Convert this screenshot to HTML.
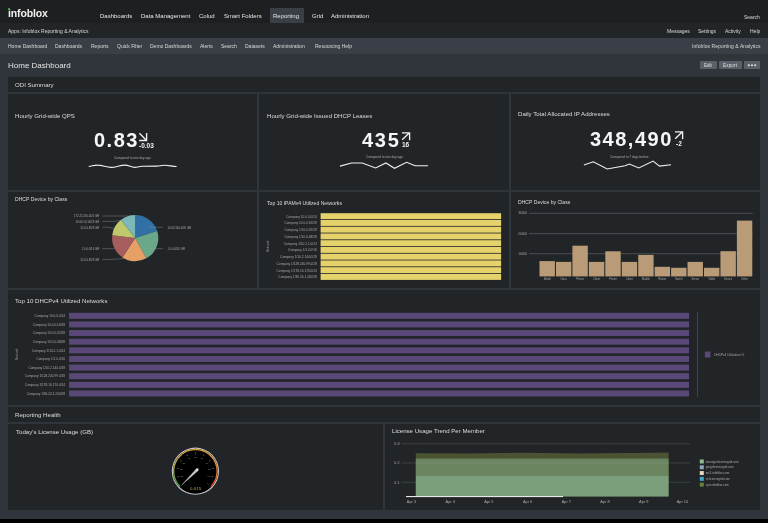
<!DOCTYPE html>
<html><head><meta charset="utf-8">
<style>
*{margin:0;padding:0;box-sizing:border-box}
html,body{width:768px;height:523px;overflow:hidden;background:#000;font-family:"Liberation Sans",sans-serif}
.a{will-change:transform}
svg text{font-family:"Liberation Sans",sans-serif}
.a{position:absolute;white-space:nowrap}
#top{position:absolute;left:0;top:0;width:768px;height:23px;background:#1e1f21}
#app{position:absolute;left:0;top:23px;width:768px;height:15px;background:#222528}
#nav{position:absolute;left:0;top:38px;width:768px;height:16px;background:#3a3f47}
#page{position:absolute;left:0;top:54px;width:768px;height:465px;background:#30343b}
.pn{position:absolute;background:#222528}
.t6{font-size:6px;color:#e6e6e6}
.t5{font-size:5px;color:#d8d8d8}
.big{font-size:20px;font-weight:bold;color:#f7f7f7;letter-spacing:1px;line-height:20px}
.dl{font-size:6.5px;font-weight:bold;color:#f0f0f0;line-height:7px}
.cmp{font-size:3.2px;color:#a8a8a8;line-height:4px}
.t5b{font-size:5.1px;color:#dcdcdc;line-height:6px}
.ttl{font-size:6.1px;color:#dcdcdc}
</style></head><body>
<div id="top"></div>
<div id="app"></div>
<div id="nav"></div>
<div id="page"></div>

<!-- logo -->
<div class="a" style="left:7.5px;top:6.5px;font-size:10.5px;font-weight:bold;color:#f0f0f0;letter-spacing:-0.15px">infoblox</div>
<div class="a" style="left:8px;top:8.3px;width:2.2px;height:2.2px;border-radius:1.1px;background:#2fb84a"></div>

<!-- top nav -->
<div class="a t6" style="left:100px;top:12.7px">Dashboards</div>
<div class="a t6" style="left:141px;top:12.7px">Data Management</div>
<div class="a t6" style="left:199px;top:12.7px">Colud</div>
<div class="a t6" style="left:224px;top:12.7px">Smart Folders</div>
<div class="a" style="left:270px;top:8px;width:34px;height:15px;background:#3a3f47"></div>
<div class="a t6" style="left:273px;top:12.7px">Reporting</div>
<div class="a t6" style="left:312px;top:12.7px">Grid</div>
<div class="a t6" style="left:331px;top:12.7px">Administration</div>
<div class="a t5" style="left:744px;top:14px">Search</div>

<!-- app bar -->
<div class="a t5" style="left:8px;top:28px">Apps: Infoblox Reporting &amp; Analytics</div>
<div class="a t5" style="left:667px;top:28px">Messages</div>
<div class="a t5" style="left:698px;top:28px">Settings</div>
<div class="a t5" style="left:725px;top:28px">Activity</div>
<div class="a t5" style="left:750px;top:28px">Help</div>

<!-- sub nav -->
<div class="a t5" style="left:8px;top:43px">Home Dashboard</div>
<div class="a t5" style="left:55px;top:43px">Dashboards</div>
<div class="a t5" style="left:91px;top:43px">Reports</div>
<div class="a t5" style="left:117px;top:43px">Quick Filter</div>
<div class="a t5" style="left:150px;top:43px">Demo Dashboards</div>
<div class="a t5" style="left:200px;top:43px">Alerts</div>
<div class="a t5" style="left:221px;top:43px">Search</div>
<div class="a t5" style="left:245px;top:43px">Datasets</div>
<div class="a t5" style="left:273px;top:43px">Administration</div>
<div class="a t5" style="left:315px;top:43px">Resourcing Help</div>
<div class="a t5" style="left:692px;top:43px;letter-spacing:0.07px">Infoblox Reporting &amp; Analytics</div>

<!-- page header -->
<div class="a" style="left:8px;top:60.7px;font-size:8px;color:#e2e2e2">Home Dashboard</div>
<div class="a" style="left:700px;top:61px;width:17px;height:8px;background:#5a6069;border-radius:1px"></div>
<div class="a" style="left:719px;top:61px;width:23px;height:8px;background:#5a6069;border-radius:1px"></div>
<div class="a" style="left:744px;top:61px;width:16px;height:8px;background:#5a6069;border-radius:1px"></div>
<div class="a" style="left:704px;top:62.5px;font-size:4.5px;color:#e0e0e0">Edit</div>
<div class="a" style="left:722.8px;top:62.5px;font-size:4.5px;color:#e0e0e0;letter-spacing:0.2px">Export</div>
<svg class="a" style="left:744px;top:61px" width="16" height="8"><circle cx="4.8" cy="4.3" r="0.95" fill="#eeeeee"/><circle cx="8" cy="4.3" r="0.95" fill="#eeeeee"/><circle cx="11.2" cy="4.3" r="0.95" fill="#eeeeee"/></svg>

<!-- panels -->
<div class="pn" style="left:8px;top:77px;width:752px;height:15px"></div>
<div class="a ttl" style="left:15px;top:81px">ODI Summary</div>

<div class="pn" style="left:8px;top:94px;width:249px;height:96px"></div>
<div class="pn" style="left:259px;top:94px;width:250px;height:96px"></div>
<div class="pn" style="left:511px;top:94px;width:249px;height:96px"></div>

<div class="pn" style="left:8px;top:192px;width:249px;height:96px"></div>
<div class="pn" style="left:259px;top:192px;width:250px;height:96px"></div>
<div class="pn" style="left:511px;top:192px;width:249px;height:96px"></div>

<div class="pn" style="left:8px;top:290px;width:752px;height:115px"></div>

<div class="pn" style="left:8px;top:407px;width:752px;height:15px"></div>
<div class="a ttl" style="left:15px;top:411px">Reporting Health</div>

<div class="pn" style="left:8px;top:424px;width:375px;height:86.3px"></div>
<div class="pn" style="left:385px;top:424px;width:375px;height:86.3px"></div>


<!-- KPI 1 -->
<div class="a ttl" style="left:15px;top:112.3px">Hourly Grid-wide QPS</div>
<div class="a big" style="left:94px;top:130px;letter-spacing:1.5px">0.83</div>
<svg class="a" style="left:137px;top:131px" width="12" height="12" viewBox="0 0 12 12"><path d="M2.4 2.2 L9.6 9.4 M2.2 9.5 H9.6 V2" stroke="#f0f0f0" stroke-width="1.35" fill="none"/></svg>
<div class="a dl" style="left:139px;top:142px">-0.03</div>
<div class="a cmp" style="left:114px;top:155.5px">Compared to one day ago</div>
<svg class="a" style="left:0;top:0" width="768" height="200"><path d="M88.7 166.5 C92 166,95 165,97.4 165.1 C103 165.2,106 167.4,111 167.4 C116 167.4,120 165.1,124.6 165.1 C129 165.1,131 167.4,134.5 167.4 C138 167.4,139 166.5,141.9 166.3 L156.8 166.1 C160 166,161 165.3,164.2 165.3 C169 165.3,172 166.5,176.6 166.5" stroke="#f0f0f0" stroke-width="1.1" fill="none"/></svg>

<!-- KPI 2 -->
<div class="a ttl" style="left:267px;top:111.6px">Hourly Grid-wide Issued DHCP Leases</div>
<div class="a big" style="left:361.8px;top:130px;letter-spacing:1.7px">435</div>
<svg class="a" style="left:400px;top:131px" width="12" height="12" viewBox="0 0 12 12"><path d="M2.2 8.8 L9.4 1.8 M1.9 1.8 H9.6 V9.2" stroke="#f0f0f0" stroke-width="1.35" fill="none"/></svg>
<div class="a dl" style="left:401.5px;top:141px">16</div>
<div class="a cmp" style="left:366px;top:155px">Compared to one day ago</div>
<svg class="a" style="left:0;top:0" width="768" height="200"><polyline points="340,166.1 351.5,163 362.2,163 375.6,168 385.9,163 394.5,168.3 406.6,162.3 415.2,165.8 428.1,165.8" stroke="#f0f0f0" stroke-width="1.1" fill="none"/></svg>

<!-- KPI 3 -->
<div class="a ttl" style="left:518px;top:110.3px">Daily Total Allocated IP Addresses</div>
<div class="a big" style="left:590px;top:129px;letter-spacing:1.5px">348,490</div>
<svg class="a" style="left:673px;top:130px" width="12" height="12" viewBox="0 0 12 12"><path d="M2.2 8.8 L9.4 1.8 M1.9 1.8 H9.6 V9.2" stroke="#f0f0f0" stroke-width="1.35" fill="none"/></svg>
<div class="a dl" style="left:675.5px;top:139.5px">-2</div>
<div class="a cmp" style="left:609.5px;top:154.5px">Compared to 7 days before</div>
<svg class="a" style="left:0;top:0" width="768" height="200"><polyline points="583.9,165.1 593.3,161.8 607.2,169 625.1,165.8 629.4,164.1 638.8,168 653.1,161.1 659.5,166.1 671,164.8" stroke="#f0f0f0" stroke-width="1.1" fill="none"/></svg>
<!-- CHARTS -->
<div class="a t5b" style="left:15px;top:195.5px">DHCP Device by Class</div>
<div class="a t5b" style="left:267px;top:200px">Top 10 IPAMv4 Utilized Networks</div>
<div class="a t5b" style="left:518px;top:199px">DHCP Device by Class</div>
<div class="a ttl" style="left:15px;top:296.5px">Top 10 DHCPv4 Utilized Networks</div>
<svg class="a" style="left:0;top:0" width="768" height="523">
<path d="M135.2,238.1 L135.20,215.00 A23.1,23.1 0 0 1 157.19,231.04 Z" fill="#3070a4"/>
<path d="M135.2,238.1 L157.19,231.04 A23.1,23.1 0 0 1 146.29,258.36 Z" fill="#69a98a"/>
<path d="M135.2,238.1 L146.29,258.36 A23.1,23.1 0 0 1 122.48,257.38 Z" fill="#e6a066"/>
<path d="M135.2,238.1 L122.48,257.38 A23.1,23.1 0 0 1 112.28,235.24 Z" fill="#a65d5e"/>
<path d="M135.2,238.1 L112.28,235.24 A23.1,23.1 0 0 1 121.01,219.87 Z" fill="#bfc86b"/>
<path d="M135.2,238.1 L121.01,219.87 A23.1,23.1 0 0 1 135.20,215.00 Z" fill="#7bb8b8"/>
<text x="99.2" y="217.4" font-size="2.8" fill="#a6a6a6" text-anchor="end">172.25.250.0/25 GR</text>
<polyline points="102.3,216.0 135,216.0" stroke="#9a9a9a" stroke-width="0.4" fill="none"/>
<text x="99.2" y="222.8" font-size="2.8" fill="#a6a6a6" text-anchor="end">10.60.10.16/28 GR</text>
<polyline points="102.3,221.4 114,221.4 120.2,220.5" stroke="#9a9a9a" stroke-width="0.4" fill="none"/>
<text x="99.2" y="228.6" font-size="2.8" fill="#a6a6a6" text-anchor="end">10.0.0.8/28 GR</text>
<polyline points="102.3,227.2 108,227.2 113.8,228.5" stroke="#9a9a9a" stroke-width="0.4" fill="none"/>
<text x="99.2" y="250.1" font-size="2.8" fill="#a6a6a6" text-anchor="end">1.0.0.0/16 GR</text>
<polyline points="102.3,248.7 114.7,248.7" stroke="#9a9a9a" stroke-width="0.4" fill="none"/>
<text x="99.2" y="261.09999999999997" font-size="2.8" fill="#a6a6a6" text-anchor="end">10.0.0.8/28 GR</text>
<polyline points="102.3,259.7 118,259.0 123.8,258.4" stroke="#9a9a9a" stroke-width="0.4" fill="none"/>
<text x="167.5" y="228.6" font-size="2.8" fill="#a6a6a6">10.64.160.0/20 GR</text>
<polyline points="149,227.2 163,227.2" stroke="#9a9a9a" stroke-width="0.4" fill="none"/>
<text x="167.5" y="250.1" font-size="2.8" fill="#a6a6a6">1.0.0.0/20 GR</text>
<polyline points="149,248.7 163,248.7" stroke="#9a9a9a" stroke-width="0.4" fill="none"/>
<rect x="320.6" y="213.20" width="180.5" height="5.95" fill="#e5d26b"/>
<text x="316.8" y="217.60" font-size="3.2" fill="#a6a6a6" text-anchor="end">Company 10.0.0.0/24</text>
<rect x="320.6" y="219.95" width="180.5" height="5.95" fill="#e5d26b"/>
<text x="316.8" y="224.35" font-size="3.2" fill="#a6a6a6" text-anchor="end">Company 10.0.0.16/28</text>
<rect x="320.6" y="226.70" width="180.5" height="5.95" fill="#e5d26b"/>
<text x="316.8" y="231.10" font-size="3.2" fill="#a6a6a6" text-anchor="end">Company 1/10.0.32/28</text>
<rect x="320.6" y="233.45" width="180.5" height="5.95" fill="#e5d26b"/>
<text x="316.8" y="237.85" font-size="3.2" fill="#a6a6a6" text-anchor="end">Company 1/10.0.48/28</text>
<rect x="320.6" y="240.20" width="180.5" height="5.95" fill="#e5d26b"/>
<text x="316.8" y="244.60" font-size="3.2" fill="#a6a6a6" text-anchor="end">Company 1/10.2.1.0/24</text>
<rect x="320.6" y="246.95" width="180.5" height="5.95" fill="#e5d26b"/>
<text x="316.8" y="251.35" font-size="3.2" fill="#a6a6a6" text-anchor="end">Company 1/1.0.0/16</text>
<rect x="320.6" y="253.70" width="180.5" height="5.95" fill="#e5d26b"/>
<text x="316.8" y="258.10" font-size="3.2" fill="#a6a6a6" text-anchor="end">Company 1/10.2.144.0/28</text>
<rect x="320.6" y="260.45" width="180.5" height="5.95" fill="#e5d26b"/>
<text x="316.8" y="264.85" font-size="3.2" fill="#a6a6a6" text-anchor="end">Company 1/128.240.99.0/28</text>
<rect x="320.6" y="267.20" width="180.5" height="5.95" fill="#e5d26b"/>
<text x="316.8" y="271.60" font-size="3.2" fill="#a6a6a6" text-anchor="end">Company 1/178.16.170.0/24</text>
<rect x="320.6" y="273.95" width="180.5" height="5.95" fill="#e5d26b"/>
<text x="316.8" y="278.35" font-size="3.2" fill="#a6a6a6" text-anchor="end">Company 1/36.24.1.240/28</text>
<text transform="translate(269.4,246.5) rotate(-90)" font-size="3.2" fill="#a6a6a6" text-anchor="middle">Network</text>
<rect x="528.9" y="212.8" width="223.9" height="1" fill="#4a4e54"/>
<text x="527" y="214.4" font-size="3.2" fill="#a6a6a6" text-anchor="end">30000</text>
<rect x="528.9" y="233.1" width="223.9" height="1" fill="#4a4e54"/>
<text x="527" y="234.7" font-size="3.2" fill="#a6a6a6" text-anchor="end">20000</text>
<rect x="528.9" y="253.2" width="223.9" height="1" fill="#4a4e54"/>
<text x="527" y="254.79999999999998" font-size="3.2" fill="#a6a6a6" text-anchor="end">10000</text>
<rect x="539.50" y="261.1" width="15.4" height="15.30" fill="#b99b77"/>
<text x="547.20" y="280.00" font-size="2.6" fill="#aaaaaa" text-anchor="middle">Model</text>
<rect x="555.95" y="261.9" width="15.4" height="14.50" fill="#b99b77"/>
<text x="563.65" y="280.00" font-size="2.6" fill="#aaaaaa" text-anchor="middle">Class</text>
<rect x="572.40" y="245.7" width="15.4" height="30.70" fill="#b99b77"/>
<text x="580.10" y="280.00" font-size="2.6" fill="#aaaaaa" text-anchor="middle">Phone</text>
<rect x="588.85" y="261.9" width="15.4" height="14.50" fill="#b99b77"/>
<text x="596.55" y="280.00" font-size="2.6" fill="#aaaaaa" text-anchor="middle">Client</text>
<rect x="605.30" y="251.3" width="15.4" height="25.10" fill="#b99b77"/>
<text x="613.00" y="280.00" font-size="2.6" fill="#aaaaaa" text-anchor="middle">Printer</text>
<rect x="621.75" y="261.9" width="15.4" height="14.50" fill="#b99b77"/>
<text x="629.45" y="280.00" font-size="2.6" fill="#aaaaaa" text-anchor="middle">Client</text>
<rect x="638.20" y="254.9" width="15.4" height="21.50" fill="#b99b77"/>
<text x="645.90" y="280.00" font-size="2.6" fill="#aaaaaa" text-anchor="middle">Mobile</text>
<rect x="654.65" y="266.8" width="15.4" height="9.60" fill="#b99b77"/>
<text x="662.35" y="280.00" font-size="2.6" fill="#aaaaaa" text-anchor="middle">Router</text>
<rect x="671.10" y="267.8" width="15.4" height="8.60" fill="#b99b77"/>
<text x="678.80" y="280.00" font-size="2.6" fill="#aaaaaa" text-anchor="middle">Switch</text>
<rect x="687.55" y="261.9" width="15.4" height="14.50" fill="#b99b77"/>
<text x="695.25" y="280.00" font-size="2.6" fill="#aaaaaa" text-anchor="middle">Server</text>
<rect x="704.00" y="267.8" width="15.4" height="8.60" fill="#b99b77"/>
<text x="711.70" y="280.00" font-size="2.6" fill="#aaaaaa" text-anchor="middle">Tablet</text>
<rect x="720.45" y="251.2" width="15.4" height="25.20" fill="#b99b77"/>
<text x="728.15" y="280.00" font-size="2.6" fill="#aaaaaa" text-anchor="middle">Device</text>
<rect x="736.90" y="220.6" width="15.4" height="55.80" fill="#b99b77"/>
<text x="744.60" y="280.00" font-size="2.6" fill="#aaaaaa" text-anchor="middle">Other</text>
<rect x="69.1" y="312.80" width="619.9" height="6.0" fill="#5a4978"/>
<text x="65.1" y="317.00" font-size="3.2" fill="#a6a6a6" text-anchor="end">Company 10.0.0.0/24</text>
<rect x="69.1" y="321.43" width="619.9" height="6.0" fill="#5a4978"/>
<text x="65.1" y="325.63" font-size="3.2" fill="#a6a6a6" text-anchor="end">Company 10.0.0.16/28</text>
<rect x="69.1" y="330.06" width="619.9" height="6.0" fill="#5a4978"/>
<text x="65.1" y="334.26" font-size="3.2" fill="#a6a6a6" text-anchor="end">Company 1/10.0.32/28</text>
<rect x="69.1" y="338.69" width="619.9" height="6.0" fill="#5a4978"/>
<text x="65.1" y="342.89" font-size="3.2" fill="#a6a6a6" text-anchor="end">Company 1/10.0.48/28</text>
<rect x="69.1" y="347.32" width="619.9" height="6.0" fill="#5a4978"/>
<text x="65.1" y="351.52" font-size="3.2" fill="#a6a6a6" text-anchor="end">Company 1/10.2.1.0/24</text>
<rect x="69.1" y="355.95" width="619.9" height="6.0" fill="#5a4978"/>
<text x="65.1" y="360.15" font-size="3.2" fill="#a6a6a6" text-anchor="end">Company 1/1.0.0/16</text>
<rect x="69.1" y="364.58" width="619.9" height="6.0" fill="#5a4978"/>
<text x="65.1" y="368.78" font-size="3.2" fill="#a6a6a6" text-anchor="end">Company 1/10.2.144.0/28</text>
<rect x="69.1" y="373.21" width="619.9" height="6.0" fill="#5a4978"/>
<text x="65.1" y="377.41" font-size="3.2" fill="#a6a6a6" text-anchor="end">Company 1/128.240.99.0/28</text>
<rect x="69.1" y="381.84" width="619.9" height="6.0" fill="#5a4978"/>
<text x="65.1" y="386.04" font-size="3.2" fill="#a6a6a6" text-anchor="end">Company 1/178.16.170.0/24</text>
<rect x="69.1" y="390.47" width="619.9" height="6.0" fill="#5a4978"/>
<text x="65.1" y="394.67" font-size="3.2" fill="#a6a6a6" text-anchor="end">Company 1/36.24.1.240/28</text>
<text transform="translate(17.6,354.5) rotate(-90)" font-size="3.2" fill="#a6a6a6" text-anchor="middle">Network</text>
<rect x="697.2" y="312" width="0.8" height="85" fill="#4a4e54"/>
<rect x="704.9" y="351.6" width="5.5" height="5.9" fill="#5a4978"/>
<text x="714.3" y="355.8" font-size="3.1" fill="#a6a6a6">DHCPv4 Utilization %</text>
</svg><!-- /CHARTS -->
<!-- BOTTOM -->
<div class="a ttl" style="left:15.5px;top:427.5px">Today&apos;s License Usage (GB)</div>
<div class="a ttl" style="left:392px;top:427px">License Usage Trend Per Member</div>
<svg class="a" style="left:0;top:0" width="768" height="523">
<defs><linearGradient id="gg" x1="0" y1="1" x2="1" y2="1"><stop offset="0" stop-color="#3f9a40"/><stop offset="0.12" stop-color="#7aa844"/><stop offset="0.3" stop-color="#c4b040"/><stop offset="0.5" stop-color="#e4a83a"/><stop offset="0.78" stop-color="#e88a34"/><stop offset="1" stop-color="#e0402a"/></linearGradient></defs>
<circle cx="195.4" cy="471.2" r="23.6" fill="#c4c4c4"/>
<circle cx="195.4" cy="471.2" r="22.5" fill="#000"/>
<path d="M180.06,486.54 A21.7,21.7 0 0 1 178.63,484.97" stroke="#439b40" stroke-width="1.3" fill="none"/>
<path d="M178.78,485.15 A21.7,21.7 0 0 1 177.50,483.46" stroke="#4c9e41" stroke-width="1.3" fill="none"/>
<path d="M177.62,483.65 A21.7,21.7 0 0 1 176.49,481.85" stroke="#55a142" stroke-width="1.3" fill="none"/>
<path d="M176.61,482.05 A21.7,21.7 0 0 1 175.64,480.16" stroke="#5da342" stroke-width="1.3" fill="none"/>
<path d="M175.73,480.37 A21.7,21.7 0 0 1 174.93,478.41" stroke="#66a643" stroke-width="1.3" fill="none"/>
<path d="M175.01,478.62 A21.7,21.7 0 0 1 174.38,476.60" stroke="#71a843" stroke-width="1.3" fill="none"/>
<path d="M174.44,476.82 A21.7,21.7 0 0 1 173.99,474.74" stroke="#7eaa42" stroke-width="1.3" fill="none"/>
<path d="M174.03,474.97 A21.7,21.7 0 0 1 173.76,472.86" stroke="#8bab42" stroke-width="1.3" fill="none"/>
<path d="M173.78,473.09 A21.7,21.7 0 0 1 173.70,470.97" stroke="#98ac41" stroke-width="1.3" fill="none"/>
<path d="M173.70,471.20 A21.7,21.7 0 0 1 173.80,469.08" stroke="#a5ae40" stroke-width="1.3" fill="none"/>
<path d="M173.78,469.31 A21.7,21.7 0 0 1 174.07,467.21" stroke="#b2af40" stroke-width="1.3" fill="none"/>
<path d="M174.03,467.43 A21.7,21.7 0 0 1 174.50,465.36" stroke="#baaf3f" stroke-width="1.3" fill="none"/>
<path d="M174.44,465.58 A21.7,21.7 0 0 1 175.09,463.57" stroke="#beae3e" stroke-width="1.3" fill="none"/>
<path d="M175.01,463.78 A21.7,21.7 0 0 1 175.83,461.82" stroke="#c2ad3e" stroke-width="1.3" fill="none"/>
<path d="M175.73,462.03 A21.7,21.7 0 0 1 176.72,460.15" stroke="#c6ac3d" stroke-width="1.3" fill="none"/>
<path d="M176.61,460.35 A21.7,21.7 0 0 1 177.76,458.57" stroke="#caab3c" stroke-width="1.3" fill="none"/>
<path d="M177.62,458.75 A21.7,21.7 0 0 1 178.92,457.08" stroke="#ceaa3b" stroke-width="1.3" fill="none"/>
<path d="M178.78,457.25 A21.7,21.7 0 0 1 180.22,455.70" stroke="#d2a93b" stroke-width="1.3" fill="none"/>
<path d="M180.06,455.86 A21.7,21.7 0 0 1 181.63,454.43" stroke="#d6a83a" stroke-width="1.3" fill="none"/>
<path d="M181.45,454.58 A21.7,21.7 0 0 1 183.14,453.30" stroke="#d8a83a" stroke-width="1.3" fill="none"/>
<path d="M182.95,453.42 A21.7,21.7 0 0 1 184.75,452.29" stroke="#daa83a" stroke-width="1.3" fill="none"/>
<path d="M184.55,452.41 A21.7,21.7 0 0 1 186.44,451.44" stroke="#dba83a" stroke-width="1.3" fill="none"/>
<path d="M186.23,451.53 A21.7,21.7 0 0 1 188.19,450.73" stroke="#dda83a" stroke-width="1.3" fill="none"/>
<path d="M187.98,450.81 A21.7,21.7 0 0 1 190.00,450.18" stroke="#dea83a" stroke-width="1.3" fill="none"/>
<path d="M189.78,450.24 A21.7,21.7 0 0 1 191.86,449.79" stroke="#e0a83a" stroke-width="1.3" fill="none"/>
<path d="M191.63,449.83 A21.7,21.7 0 0 1 193.74,449.56" stroke="#e1a83a" stroke-width="1.3" fill="none"/>
<path d="M193.51,449.58 A21.7,21.7 0 0 1 195.63,449.50" stroke="#e3a83a" stroke-width="1.3" fill="none"/>
<path d="M195.40,449.50 A21.7,21.7 0 0 1 197.52,449.60" stroke="#e4a73a" stroke-width="1.3" fill="none"/>
<path d="M197.29,449.58 A21.7,21.7 0 0 1 199.39,449.87" stroke="#e4a53a" stroke-width="1.3" fill="none"/>
<path d="M199.17,449.83 A21.7,21.7 0 0 1 201.24,450.30" stroke="#e4a43a" stroke-width="1.3" fill="none"/>
<path d="M201.02,450.24 A21.7,21.7 0 0 1 203.03,450.89" stroke="#e5a33a" stroke-width="1.3" fill="none"/>
<path d="M202.82,450.81 A21.7,21.7 0 0 1 204.78,451.63" stroke="#e5a13a" stroke-width="1.3" fill="none"/>
<path d="M204.57,451.53 A21.7,21.7 0 0 1 206.45,452.52" stroke="#e5a03a" stroke-width="1.3" fill="none"/>
<path d="M206.25,452.41 A21.7,21.7 0 0 1 208.03,453.56" stroke="#e69f3a" stroke-width="1.3" fill="none"/>
<path d="M207.85,453.42 A21.7,21.7 0 0 1 209.52,454.72" stroke="#e69d3a" stroke-width="1.3" fill="none"/>
<path d="M209.35,454.58 A21.7,21.7 0 0 1 210.90,456.02" stroke="#e69c3a" stroke-width="1.3" fill="none"/>
<path d="M210.74,455.86 A21.7,21.7 0 0 1 212.17,457.43" stroke="#e79b3a" stroke-width="1.3" fill="none"/>
<path d="M212.02,457.25 A21.7,21.7 0 0 1 213.30,458.94" stroke="#e7993a" stroke-width="1.3" fill="none"/>
<path d="M213.18,458.75 A21.7,21.7 0 0 1 214.31,460.55" stroke="#e7983a" stroke-width="1.3" fill="none"/>
<path d="M214.19,460.35 A21.7,21.7 0 0 1 215.16,462.24" stroke="#e89539" stroke-width="1.3" fill="none"/>
<path d="M215.07,462.03 A21.7,21.7 0 0 1 215.87,463.99" stroke="#e89138" stroke-width="1.3" fill="none"/>
<path d="M215.79,463.78 A21.7,21.7 0 0 1 216.42,465.80" stroke="#e88d37" stroke-width="1.3" fill="none"/>
<path d="M216.36,465.58 A21.7,21.7 0 0 1 216.81,467.66" stroke="#e88936" stroke-width="1.3" fill="none"/>
<path d="M216.77,467.43 A21.7,21.7 0 0 1 217.04,469.54" stroke="#e88535" stroke-width="1.3" fill="none"/>
<path d="M217.02,469.31 A21.7,21.7 0 0 1 217.10,471.43" stroke="#e88134" stroke-width="1.3" fill="none"/>
<path d="M217.10,471.20 A21.7,21.7 0 0 1 217.00,473.32" stroke="#e87d33" stroke-width="1.3" fill="none"/>
<path d="M217.02,473.09 A21.7,21.7 0 0 1 216.73,475.19" stroke="#e87932" stroke-width="1.3" fill="none"/>
<path d="M216.77,474.97 A21.7,21.7 0 0 1 216.30,477.04" stroke="#e87531" stroke-width="1.3" fill="none"/>
<path d="M216.36,476.82 A21.7,21.7 0 0 1 215.71,478.83" stroke="#e87130" stroke-width="1.3" fill="none"/>
<path d="M215.79,478.62 A21.7,21.7 0 0 1 214.97,480.58" stroke="#e76a2f" stroke-width="1.3" fill="none"/>
<path d="M215.07,480.37 A21.7,21.7 0 0 1 214.08,482.25" stroke="#e5612e" stroke-width="1.3" fill="none"/>
<path d="M214.19,482.05 A21.7,21.7 0 0 1 213.04,483.83" stroke="#e3572c" stroke-width="1.3" fill="none"/>
<path d="M213.18,483.65 A21.7,21.7 0 0 1 211.88,485.32" stroke="#e24d2b" stroke-width="1.3" fill="none"/>
<path d="M212.02,485.15 A21.7,21.7 0 0 1 210.74,486.54" stroke="#e0442a" stroke-width="1.3" fill="none"/>
<line x1="183.52" y1="483.08" x2="182.11" y2="484.49" stroke="#9a9a9a" stroke-width="0.5"/>
<line x1="179.42" y1="476.39" x2="177.52" y2="477.01" stroke="#9a9a9a" stroke-width="0.5"/>
<text x="181.80" y="476.52" font-size="2.5" fill="#8c8c8c" text-anchor="middle">10</text>
<line x1="178.81" y1="468.57" x2="176.83" y2="468.26" stroke="#9a9a9a" stroke-width="0.5"/>
<text x="181.28" y="469.86" font-size="2.5" fill="#8c8c8c" text-anchor="middle">20</text>
<line x1="181.81" y1="461.33" x2="180.19" y2="460.15" stroke="#9a9a9a" stroke-width="0.5"/>
<text x="183.83" y="463.69" font-size="2.5" fill="#8c8c8c" text-anchor="middle">30</text>
<line x1="187.77" y1="456.23" x2="186.86" y2="454.45" stroke="#9a9a9a" stroke-width="0.5"/>
<text x="188.91" y="459.36" font-size="2.5" fill="#8c8c8c" text-anchor="middle">40</text>
<line x1="195.40" y1="454.40" x2="195.40" y2="452.40" stroke="#9a9a9a" stroke-width="0.5"/>
<text x="195.40" y="457.80" font-size="2.5" fill="#8c8c8c" text-anchor="middle">50</text>
<line x1="203.03" y1="456.23" x2="203.94" y2="454.45" stroke="#9a9a9a" stroke-width="0.5"/>
<text x="201.89" y="459.36" font-size="2.5" fill="#8c8c8c" text-anchor="middle">60</text>
<line x1="208.99" y1="461.33" x2="210.61" y2="460.15" stroke="#9a9a9a" stroke-width="0.5"/>
<text x="206.97" y="463.69" font-size="2.5" fill="#8c8c8c" text-anchor="middle">70</text>
<line x1="211.99" y1="468.57" x2="213.97" y2="468.26" stroke="#9a9a9a" stroke-width="0.5"/>
<text x="209.52" y="469.86" font-size="2.5" fill="#8c8c8c" text-anchor="middle">80</text>
<line x1="211.38" y1="476.39" x2="213.28" y2="477.01" stroke="#9a9a9a" stroke-width="0.5"/>
<text x="209.00" y="476.52" font-size="2.5" fill="#8c8c8c" text-anchor="middle">90</text>
<line x1="207.28" y1="483.08" x2="208.69" y2="484.49" stroke="#9a9a9a" stroke-width="0.5"/>
<path d="M196.18,468.77 L180.50,486.20 L198.22,470.83 Z" fill="#c4c4c4"/>
<circle cx="197.2" cy="469.8" r="1.45" fill="#d8d8d8"/>
<text x="195.6" y="489.6" font-size="4.4" fill="#b3a45e" text-anchor="middle">0.015</text>
<text x="399.5" y="445.0" font-size="3.7" fill="#a8a8a8" text-anchor="end">0.3</text>
<text x="399.5" y="464.3" font-size="3.7" fill="#a8a8a8" text-anchor="end">0.2</text>
<text x="399.5" y="483.5" font-size="3.7" fill="#a8a8a8" text-anchor="end">0.1</text>
<path d="M415.8,453.2 L470,453.6 L520,452.8 L580,453.6 L630,453.0 L668.6,452.6 L668.6,496.5 L415.8,496.5 Z" fill="#4a5433"/>
<rect x="415.8" y="458.6" width="252.8" height="17.4" fill="#6b8561"/>
<rect x="415.8" y="476" width="252.8" height="20.5" fill="#7b9f7b"/>
<rect x="401.3" y="443.2" width="288.7" height="1" fill="#9aa39a" fill-opacity="0.22"/>
<rect x="401.3" y="462.5" width="288.7" height="1" fill="#9aa39a" fill-opacity="0.22"/>
<rect x="401.3" y="481.7" width="288.7" height="1" fill="#9aa39a" fill-opacity="0.22"/>
<rect x="406" y="496" width="157" height="1.1" fill="#e8e8e8"/>
<text x="411.5" y="502.9" font-size="3.9" fill="#a8a8a8" text-anchor="middle">Apr 3</text>
<text x="450.2" y="502.9" font-size="3.9" fill="#a8a8a8" text-anchor="middle">Apr 4</text>
<text x="488.9" y="502.9" font-size="3.9" fill="#a8a8a8" text-anchor="middle">Apr 5</text>
<text x="527.6" y="502.9" font-size="3.9" fill="#a8a8a8" text-anchor="middle">Apr 6</text>
<text x="566.3" y="502.9" font-size="3.9" fill="#a8a8a8" text-anchor="middle">Apr 7</text>
<text x="605.0" y="502.9" font-size="3.9" fill="#a8a8a8" text-anchor="middle">Apr 8</text>
<text x="643.7" y="502.9" font-size="3.9" fill="#a8a8a8" text-anchor="middle">Apr 9</text>
<text x="682.4" y="502.9" font-size="3.9" fill="#a8a8a8" text-anchor="middle">Apr 10</text>
<rect x="699.8" y="459.50" width="4" height="4" fill="#8fbb8a"/>
<text x="705.8" y="462.50" font-size="3" fill="#a8a8a8">managerlicensegrid.com</text>
<rect x="699.8" y="465.28" width="4" height="4" fill="#8ea6bd"/>
<text x="705.8" y="468.28" font-size="3" fill="#a8a8a8">gmgrlicensegrid.com</text>
<rect x="699.8" y="471.06" width="4" height="4" fill="#e8d8c0"/>
<text x="705.8" y="474.06" font-size="3" fill="#a8a8a8">mc1.infoblox.com</text>
<rect x="699.8" y="476.84" width="4" height="4" fill="#3fa6c8"/>
<text x="705.8" y="479.84" font-size="3" fill="#a8a8a8">nclicensegrid.com</text>
<rect x="699.8" y="482.62" width="4" height="4" fill="#6b7d3e"/>
<text x="705.8" y="485.62" font-size="3" fill="#a8a8a8">syncinfoblox.com</text>
</svg><!-- /BOTTOM -->
</body></html>
